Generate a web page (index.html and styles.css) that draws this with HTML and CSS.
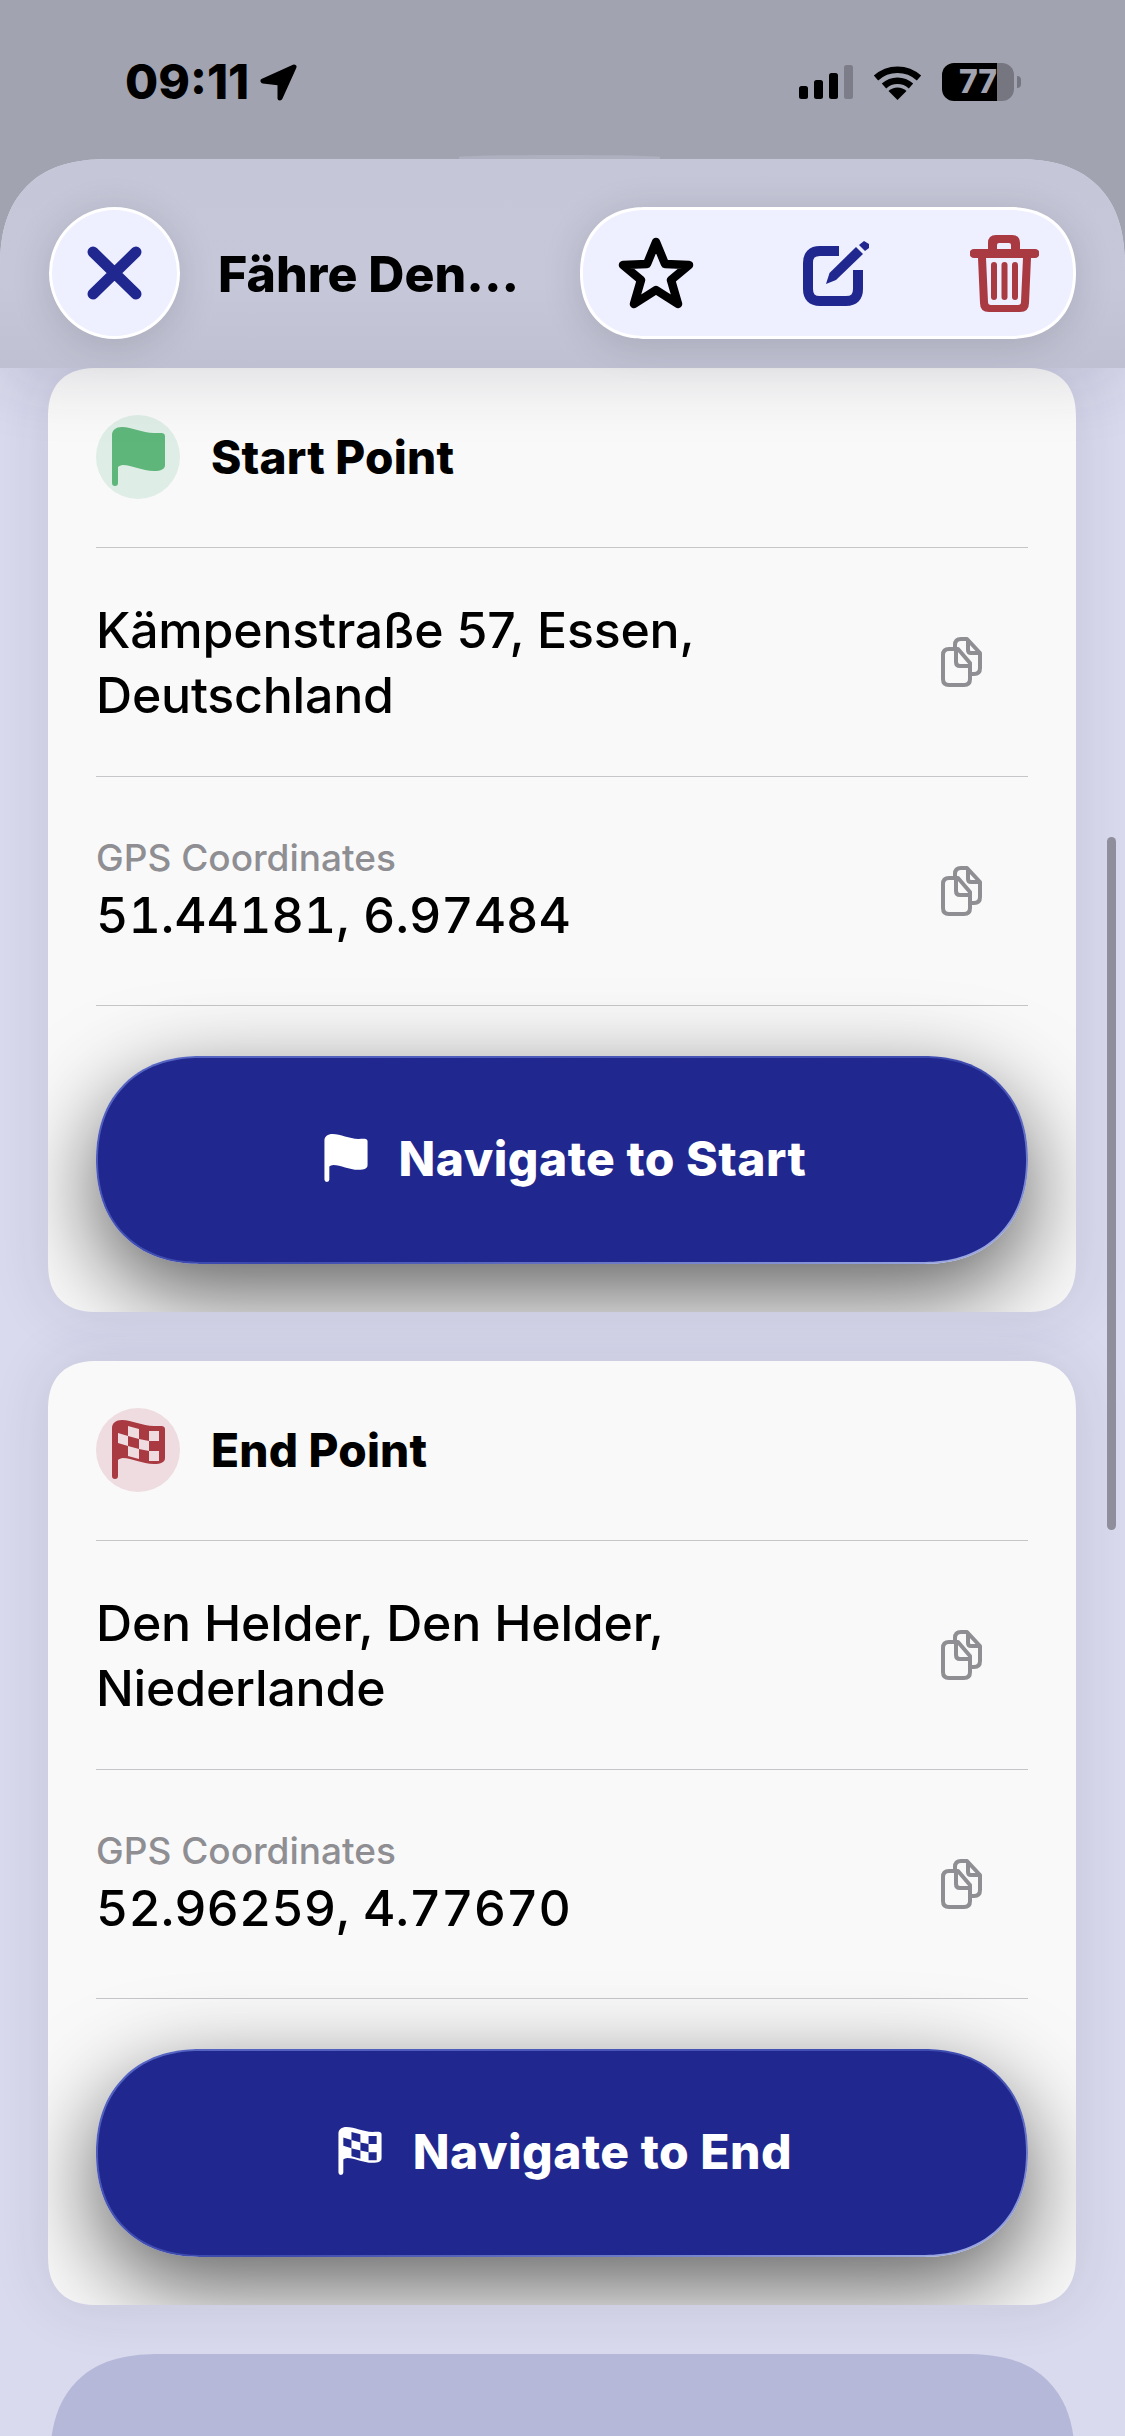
FILE: index.html
```html
<!DOCTYPE html>
<html lang="de">
<head>
    <meta charset="UTF-8">
    <meta name="viewport" content="width=device-width, initial-scale=1.0">
    <title>Fähre Den Helder</title>
    <link rel="stylesheet" href="styles.css">
</head>
<body>
    <svg class="defs" width="0" height="0">
        <symbol id="copy" viewBox="0 0 41 50">
            <g fill="none" stroke="currentColor" stroke-width="4" stroke-linejoin="round">
                <path d="M14 12V8Q14 2 20 2H26L39 16V31Q39 37 33 37H30"/>
                <path d="M15 12V25Q15 29 19 29H28"/>
                <path d="M27 3V13Q27 16 30 16H38"/>
                <path d="M8 12H17L29 26V42Q29 48 23 48H8Q2 48 2 42V18Q2 12 8 12Z"/>
            </g>
        </symbol>
        <symbol id="flag" viewBox="0 0 53 59">
            <path fill="currentColor" d="M0 8C0 3 4 0 10 0C20 0 30 6 42 6C48 6 53 5 53 9V38C53 42 49 44 42 44C30 44 20 38 11 38C9 38 7 39 6 40V56A3 3 0 0 1 0 56Z"/>
        </symbol>
        <symbol id="checkered" viewBox="0 0 53 59">
            <path fill="currentColor" fill-rule="evenodd" d="M0 8C0 3 4 0 10 0C20 0 30 6 42 6C48 6 53 5 53 9V38C53 42 49 44 42 44C30 44 20 38 11 38C9 38 7 39 6 40V56A3 3 0 0 1 0 56Z
                M16 6L27 9V19L16 16Z M37 11H47V21H37Z M6 13L16 16V26L6 23Z M27 19L37 21V31L27 29Z M16 26L27 29V39L16 36Z M37 31H47V41H37Z"/>
        </symbol>
    </svg>

    <div class="status">
        <div class="status-left">
            <span class="time">09:11</span>
            <svg class="arrow" viewBox="0 0 37 37"><polygon points="34,3 3,17 20,19 20,34" fill="#000" stroke="#000" stroke-width="5" stroke-linejoin="round"/></svg>
        </div>
        <div class="status-right">
            <svg class="signal" viewBox="0 0 54 34">
                <rect x="0" y="21" width="9" height="13" rx="2.5"/>
                <rect x="15" y="15" width="9" height="19" rx="2.5"/>
                <rect x="30" y="8" width="9" height="26" rx="2.5"/>
                <rect x="45" y="0" width="9" height="34" rx="2.5" fill="#7c7d89"/>
            </svg>
            <svg class="wifi" viewBox="0 0 49 35">
                <path d="M3 13A32 32 0 0 1 46 13" fill="none" stroke="#000" stroke-width="6.5"/>
                <path d="M11 21A20 20 0 0 1 38 21" fill="none" stroke="#000" stroke-width="6.5"/>
                <path d="M24.5 35L15.5 26A13 13 0 0 1 33.5 26Z"/>
            </svg>
            <div class="battery"><span>77</span></div>
            <div class="battery-nub"></div>
        </div>
    </div>

    <div class="sheet">
        <div class="header">
            <button class="close">
                <svg viewBox="0 0 55 54" width="55" height="54"><path d="M6 6L49 48M49 6L6 48" fill="none" stroke="#20288f" stroke-width="11" stroke-linecap="round"/></svg>
            </button>
            <div class="title">Fähre Den...</div>
            <div class="actions">
                <svg class="star" viewBox="0 0 76 72"><polygon points="38,5 47,27 71,28 53,43 60,67 38,53 16,67 23,43 5,28 29,27" fill="none" stroke="#000" stroke-width="8.5" stroke-linejoin="round"/></svg>
                <svg class="edit" viewBox="0 0 67 67">
                    <path d="M36 11H17Q5 11 5 23V49Q5 61 17 61H43Q55 61 55 49V30" fill="none" stroke="#20288f" stroke-width="10"/>
                    <polygon points="23,44 26.5,33 53,7 60,14 33,40" fill="#20288f"/>
                    <polygon points="56,5 61,1 66,4 66,8 62,11" fill="#20288f"/>
                </svg>
                <svg class="trash" viewBox="0 0 69 77">
                    <path fill="#a93a42" fill-rule="evenodd" d="M18 14V8Q18 0 26 0H42Q50 0 50 8V14H65A4 4 0 0 1 65 23H61L59 68Q59 77 50 77H19Q10 77 10 68L8 23H4A4 4 0 0 1 4 14Z M27 14H41V10Q41 8 39 8H29Q27 8 27 10Z M16 23L18 67Q18 70 21 70H48Q51 70 51 67L53 23Z"/>
                    <rect x="21" y="27" width="6" height="38" rx="3" fill="#a93a42"/>
                    <rect x="31.5" y="27" width="6" height="38" rx="3" fill="#a93a42"/>
                    <rect x="42" y="27" width="6" height="38" rx="3" fill="#a93a42"/>
                </svg>
            </div>
        </div>

        <div class="list">
            <div class="card">
                <div class="card-head">
                    <div class="badge badge-green"><svg class="badge-icon"><use href="#flag"/></svg></div>
                    <div class="card-title">Start Point</div>
                </div>
                <div class="row">
                    <div class="address">Kämpenstraße 57, Essen,<br>Deutschland</div>
                    <svg class="copy"><use href="#copy"/></svg>
                </div>
                <div class="row">
                    <div>
                        <div class="label">GPS Coordinates</div>
                        <div class="coords">51.44181, 6.97484</div>
                    </div>
                    <svg class="copy"><use href="#copy"/></svg>
                </div>
                <button class="nav">
                    <svg class="nav-icon"><use href="#flag"/></svg>
                    Navigate to Start
                </button>
            </div>

            <div class="card">
                <div class="card-head">
                    <div class="badge badge-red"><svg class="badge-icon"><use href="#checkered"/></svg></div>
                    <div class="card-title">End Point</div>
                </div>
                <div class="row">
                    <div class="address">Den Helder, Den Helder,<br>Niederlande</div>
                    <svg class="copy"><use href="#copy"/></svg>
                </div>
                <div class="row">
                    <div>
                        <div class="label">GPS Coordinates</div>
                        <div class="coords">52.96259, 4.77670</div>
                    </div>
                    <svg class="copy"><use href="#copy"/></svg>
                </div>
                <button class="nav">
                    <svg class="nav-icon"><use href="#checkered"/></svg>
                    Navigate to End
                </button>
            </div>

            <div class="card-next"></div>
        </div>

        <div class="scrollbar"></div>
    </div>
</body>
</html>
```

FILE: styles.css
```css
*{
    padding: 0;
    margin: 0;
    box-sizing: border-box;
}
html,body{
    width: 1125px;
    height: 2436px;
    overflow: hidden;
}
body{
    background-color: #a1a3b0;
    font-family: Inter, "Liberation Sans", sans-serif;
    color: #000;
}
button{
    font-family: inherit;
    border: none;
}
.defs{
    display: block;
    height: 0;
}

/* status bar */
.status{
    position: relative;
    height: 159px;
    padding: 63px 104px 0 125px;
    display: flex;
    justify-content: space-between;
    align-items: flex-start;
}
.status::after{
    content: "";
    position: absolute;
    left: 459px;
    bottom: 0;
    width: 201px;
    height: 4px;
    background-color: #aeb0bf;
    border-radius: 50% 50% 0 0;
}
.status-left{
    display: flex;
    align-items: center;
    gap: 11px;
    height: 38px;
}
.time{
    font-size: 48px;
    font-weight: 800;
    line-height: 38px;
}
.arrow{
    width: 37px;
    height: 37px;
}
.status-right{
    display: flex;
    align-items: center;
    height: 38px;
}
.signal{
    width: 54px;
    height: 34px;
    margin-right: 20px;
}
.wifi{
    width: 49px;
    height: 35px;
    margin-right: 20px;
}
.battery{
    width: 72px;
    height: 38px;
    border-radius: 12px;
    background: linear-gradient(90deg, #000 55px, #75767f 55px);
    text-align: center;
}
.battery span{
    display: block;
    font-size: 32px;
    font-weight: 800;
    line-height: 38px;
    color: #a1a3b0;
}
.battery-nub{
    width: 4px;
    height: 12px;
    margin-left: 3px;
    background-color: #75767f;
    border-radius: 0 4px 4px 0;
}

/* sheet */
.sheet{
    position: relative;
    height: 2277px;
    overflow: hidden;
    border-radius: 110px 110px 0 0;
    corner-shape: superellipse(1.3);
    background-color: #d9daed;
}
.header{
    position: relative;
    z-index: 2;
    height: 209px;
    padding: 48px 49px 0;
    display: flex;
    align-items: flex-start;
    background: linear-gradient(180deg, #c5c7d8 0%, #c6c8da 60%, #bfc1d2 100%);
    box-shadow: 0 8px 70px rgba(40,40,70,0.15);
}
.close{
    flex: none;
    width: 131px;
    height: 132px;
    border-radius: 50%;
    background-color: #eeefff;
    border: 3px solid #fff;
    display: flex;
    align-items: center;
    justify-content: center;
    box-shadow: 0 6px 40px rgba(0,0,0,0.14);
}
.title{
    flex: 1;
    margin-left: 38px;
    height: 132px;
    font-size: 50px;
    font-weight: 800;
    line-height: 134px;
    white-space: nowrap;
}
.actions{
    position: relative;
    flex: none;
    width: 496px;
    height: 132px;
    border-radius: 66px;
    corner-shape: superellipse(1.15);
    background-color: #eeefff;
    border: 3px solid #fff;
    box-shadow: 0 6px 40px rgba(0,0,0,0.14);
    display: flex;
    align-items: center;
    padding-left: 35px;
}
.star{
    width: 76px;
    height: 72px;
}
.edit{
    width: 67px;
    height: 67px;
    margin-left: 109px;
}
.trash{
    width: 69px;
    height: 77px;
    margin-left: 100px;
}

/* cards */
.list{
    padding: 0 49px 0 48px;
}
.card{
    margin-bottom: 49px;
    height: 944px;
    padding: 47px 48px 0;
    overflow: hidden;
    border-radius: 50px;
    corner-shape: superellipse(1.3);
    background-color: #f9f9f9;
    box-shadow: 0 0 60px rgba(40,40,80,0.12);
}
.card-head{
    display: flex;
    align-items: center;
    gap: 31px;
    height: 133px;
    padding-bottom: 49px;
    border-bottom: 1px solid #c6c6c8;
}
.badge{
    flex: none;
    width: 84px;
    height: 84px;
    border-radius: 50%;
    display: flex;
    align-items: center;
    justify-content: center;
}
.badge-green{
    background-color: #deede5;
    color: #5fb67b;
}
.badge-red{
    background-color: #eedce0;
    color: #a93a42;
}
.badge-icon{
    width: 53px;
    height: 59px;
}
.card-title{
    font-size: 46px;
    font-weight: 800;
    letter-spacing: 0.2px;
}
.row{
    height: 229px;
    padding-right: 46px;
    display: flex;
    align-items: center;
    justify-content: space-between;
    border-bottom: 1px solid #c6c6c8;
}
.address{
    font-size: 50px;
    font-weight: 550;
    line-height: 65px;
    padding-top: 2px;
    letter-spacing: -0.2px;
}
.label{
    font-size: 37px;
    font-weight: 500;
    line-height: 44px;
    color: #8e8e93;
    margin-bottom: 4px;
}
.coords{
    font-size: 50px;
    font-weight: 550;
    line-height: 62px;
    font-variant-numeric: tabular-nums;
}
.copy{
    flex: none;
    width: 41px;
    height: 50px;
    color: #8e8e93;
}
.nav{
    width: 100%;
    height: 208px;
    margin-top: 50px;
    padding: 0 0 4px 6px;
    border: 2px solid transparent;
    border-radius: 104px;
    corner-shape: superellipse(1.15);
    background: linear-gradient(#20288f,#20288f) padding-box,
        linear-gradient(165deg,#5a68c4 0%,#3b48ad 55%,#a5b2e8 100%) border-box;
    box-shadow: 0 30px 90px rgba(0,0,0,0.62);
    color: #fff;
    font-size: 48px;
    font-weight: 800;
    letter-spacing: 0.5px;
    display: flex;
    align-items: center;
    justify-content: center;
    gap: 31px;
}
.nav-icon{
    width: 44px;
    height: 48px;
}
.card-next{
    margin: 0 1px 0 2px;
    height: 300px;
    border-radius: 110px;
    corner-shape: superellipse(1.3);
    background-color: #b6b8d9;
}
.scrollbar{
    position: absolute;
    top: 678px;
    left: 1107px;
    width: 9px;
    height: 693px;
    border-radius: 5px;
    background-color: #8e8e9c;
}
```
